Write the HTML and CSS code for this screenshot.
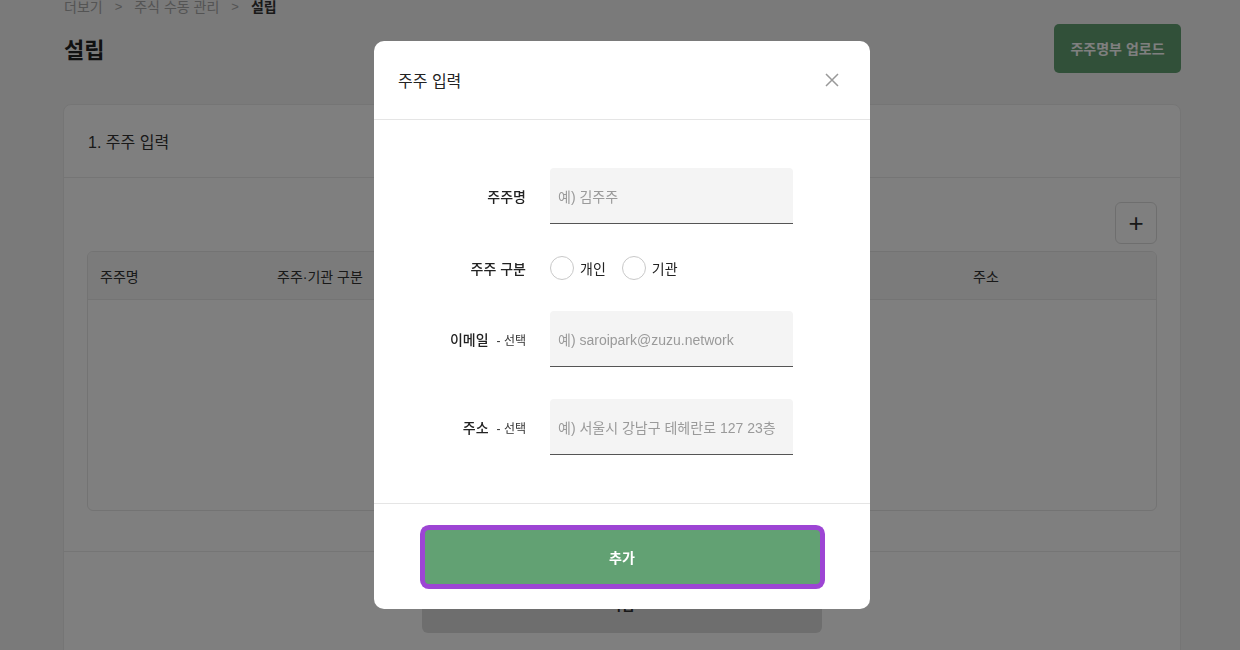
FILE: index.html
```html
<!DOCTYPE html>
<html lang="ko">
<head>
<meta charset="utf-8">
<title>설립</title>
<link rel="stylesheet" href="styles.css">
</head>
<body>
<div class="page">
  <nav class="crumbs">
    <span>더보기</span><span class="sep">&gt;</span><span>주식 수동 관리</span><span class="sep">&gt;</span><span class="current">설립</span>
  </nav>
  <header class="page-head">
    <h1 class="title">설립</h1>
    <button class="btn-upload">주주명부 업로드</button>
  </header>
  <section class="card">
    <div class="card-head">1. 주주 입력</div>
    <div class="card-body">
      <div class="tools"><button class="btn-plus">+</button></div>
      <div class="table">
        <div class="thead">
          <div class="th c1">주주명</div>
          <div class="th c2">주주·기관 구분</div>
          <div class="th c3">이메일</div>
          <div class="th c4">주소</div>
        </div>
        <div class="tbody"></div>
      </div>
    </div>
    <div class="card-foot">
      <button class="btn-next">다음</button>
    </div>
  </section>
</div>

<div class="overlay">
  <div class="modal">
    <div class="modal-head">
      <span class="modal-title">주주 입력</span>
      <svg class="close" width="16" height="16" viewBox="0 0 16 16"><path d="M2 2 L14 14 M14 2 L2 14" stroke="#999" stroke-width="1.5" fill="none"/></svg>
    </div>
    <div class="modal-body">
      <div class="row">
        <label class="lbl">주주명</label>
        <div class="field"><span class="ph">예) 김주주</span></div>
      </div>
      <div class="row row-radio">
        <label class="lbl">주주 구분</label>
        <div class="radios">
          <span class="radio"></span><span class="rtext">개인</span>
          <span class="radio"></span><span class="rtext">기관</span>
        </div>
      </div>
      <div class="row">
        <label class="lbl">이메일<small>- 선택</small></label>
        <div class="field"><span class="ph">예) saroipark@zuzu.network</span></div>
      </div>
      <div class="row">
        <label class="lbl">주소<small>- 선택</small></label>
        <div class="field"><span class="ph">예) 서울시 강남구 테헤란로 127 23층</span></div>
      </div>
    </div>
    <div class="modal-foot">
      <button class="btn-add">추가</button>
    </div>
  </div>
</div>
</body>
</html>
```

FILE: styles.css
```css
* { box-sizing: border-box; }
html, body { margin: 0; padding: 0; }
body {
  background: #f4f4f4;
  font-family: "Liberation Sans", "Noto Sans CJK KR", sans-serif;
  color: #222;
  width: 1240px;
  height: 650px;
  overflow: hidden;
}
button { font-family: inherit; border: 0; cursor: pointer; }

.page { padding: 0 59px 0 63px; }

.crumbs {
  margin-top: -3px;
  height: 20px;
  line-height: 20px;
  font-size: 14px;
  color: #a8a8a8;
  padding-left: 1px;
  display: flex;
}
.crumbs .sep { margin: 0 12px; font-size: 13px; }
.crumbs .current { color: #333; font-weight: 700; }

.page-head {
  margin-top: 7px;
  display: flex;
  justify-content: space-between;
  align-items: center;
  height: 48px;
}
.title { margin: 0 0 0 1px; font-size: 22px; font-weight: 700; color: #222; }
.btn-upload {
  width: 127px; height: 49px;
  background: #62a173;
  color: #fff;
  border-radius: 5px;
  font-size: 14px;
  font-weight: 700;
}

.card {
  margin-top: 32px;
  background: #fff;
  border: 1px solid #ebebeb;
  border-radius: 8px;
  height: 600px;
}
.card-head {
  height: 73px;
  padding: 0 24px;
  display: flex;
  align-items: center;
  font-size: 16px;
  color: #333;
  border-bottom: 1px solid #ebebeb;
}
.card-body { padding: 24px 23px 40px 23px; border-bottom: 1px solid #ebebeb; }
.tools { display: flex; justify-content: flex-end; margin-bottom: 7px; }
.btn-plus {
  width: 42px; height: 42px;
  background: #fff;
  border: 1px solid #ddd;
  border-radius: 6px;
  font-size: 26px;
  font-weight: 300;
  color: #333;
  line-height: 1;
  padding: 0;
}
.table {
  border: 1px solid #e6e6e6;
  border-radius: 6px;
  height: 260px;
  overflow: hidden;
}
.thead {
  display: flex;
  height: 48px;
  align-items: center;
  background: #f7f7f7;
  border-bottom: 1px solid #e8e8e8;
  font-size: 14px;
  color: #333;
}
.th.c1 { width: 189px; padding-left: 12px; }
.th.c2 { width: 230px; }
.th.c3 { flex: 1; text-align: center; }
.th.c4 { width: 340px; text-align: center; }

.card-foot { display: flex; justify-content: center; padding-top: 38px; }
.btn-next {
  width: 400px; height: 43px;
  background: #dddddd;
  color: #333;
  border-radius: 6px;
  font-size: 14px;
  font-weight: 700;
  padding: 0 0 16px 0;
}

.overlay {
  position: fixed;
  inset: 0;
  background: rgba(0, 0, 0, 0.5);
  display: flex;
  justify-content: center;
  align-items: flex-start;
}
.modal {
  margin-top: 41px;
  margin-left: 4px;
  width: 496px;
  height: 568px;
  background: #fff;
  border-radius: 10px;
  display: flex;
  flex-direction: column;
}
.modal-head {
  height: 79px;
  padding: 0 30px 0 24px;
  display: flex;
  align-items: center;
  justify-content: space-between;
  border-bottom: 1px solid #e5e5e5;
}
.modal-title { font-size: 16px; color: #222; }
.close { display: block; }

.modal-body {
  padding: 48px 0 48px 24px;
  display: flex;
  flex-direction: column;
  gap: 32px;
  border-bottom: 1px solid #e5e5e5;
}
.row { display: grid; grid-template-columns: 128px 243px; column-gap: 24px; align-items: center; }
.lbl {
  text-align: right;
  font-size: 14px;
  font-weight: 500;
  color: #222;
}
.lbl small { font-size: 12px; font-weight: 400; margin-left: 8px; color: #333; }
.field {
  height: 56px;
  background: #f4f4f4;
  border-bottom: 1px solid #555;
  border-radius: 4px 4px 0 0;
  display: flex;
  align-items: center;
  padding-left: 8px;
}
.ph { font-size: 14px; color: #9a9a9a; }
.row-radio { height: 23px; }
.radios { display: flex; align-items: center; height: 23px; }
.radio {
  width: 24px; height: 24px;
  flex: none;
  border: 1px solid #c8c8c8;
  border-radius: 50%;
  background: #fff;
}
.rtext { font-size: 14px; color: #222; margin: 0 16px 0 6px; }

.modal-foot { flex: 1; display: flex; justify-content: center; padding-top: 26px; }
.btn-add {
  width: 395px; height: 54px;
  background: #62a173;
  color: #fff;
  border-radius: 4px;
  font-size: 14px;
  font-weight: 700;
  box-shadow: 0 0 0 5px #9d45d4;
}
```
